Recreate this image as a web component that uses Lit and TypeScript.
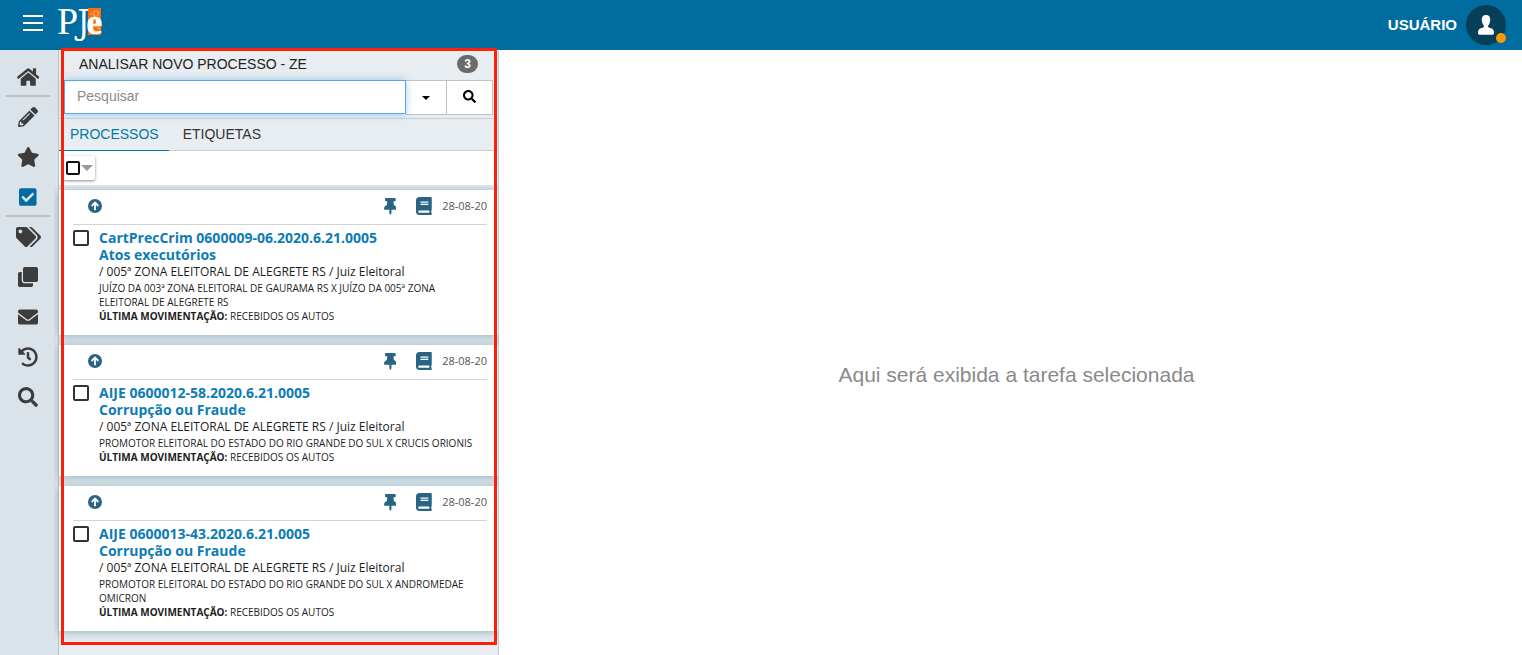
import { LitElement, html, svg, css } from "lit";
import { customElement, property, state } from "lit/decorators.js";
import { classMap } from "lit/directives/class-map.js";

const ICONS: Record<string, [number, string]> = {
  home: [576, "M280.37 148.26L96 300.11V464a16 16 0 0 0 16 16l112.06-.29a16 16 0 0 0 15.92-16V368a16 16 0 0 1 16-16h64a16 16 0 0 1 16 16v95.64a16 16 0 0 0 16 16.05L464 480a16 16 0 0 0 16-16V300L295.67 148.26a12.19 12.19 0 0 0-15.3 0zM571.6 251.47L488 182.56V44.05a12 12 0 0 0-12-12h-56a12 12 0 0 0-12 12v72.61L318.47 43a48 48 0 0 0-61 0L4.34 251.47a12 12 0 0 0-1.6 16.9l25.5 31A12 12 0 0 0 45.15 301l235.22-193.74a12.19 12.19 0 0 1 15.3 0L530.9 301a12 12 0 0 0 16.9-1.6l25.5-31a12 12 0 0 0-1.7-16.93z"],
  pencil: [512, "M497.9 142.1l-46.1 46.1c-4.7 4.7-12.3 4.7-17 0l-111-111c-4.7-4.7-4.7-12.3 0-17l46.1-46.1c18.7-18.7 49.1-18.7 67.9 0l60.1 60.1c18.8 18.7 18.8 49.1 0 67.9zM284.2 99.8L21.6 362.4.4 483.9c-2.9 16.4 11.4 30.6 27.8 27.8l121.5-21.3 262.6-262.6c4.7-4.7 4.7-12.3 0-17l-111-111c-4.8-4.7-12.4-4.7-17.1 0zM124.1 339.9c-5.5-5.5-5.5-14.3 0-19.8l154-154c5.5-5.5 14.3-5.5 19.8 0s5.5 14.3 0 19.8l-154 154c-5.5 5.5-14.3 5.5-19.8 0zM88 424h48v36.3l-64.5 11.3-31.1-31.1L51.7 376H88v48z"],
  star: [576, "M259.3 17.8L194 150.2 47.9 171.5c-26.2 3.8-36.7 36.1-17.7 54.6l105.7 103-25 145.5c-4.5 26.3 23.2 46 46.4 33.7L288 439.6l130.7 68.7c23.2 12.2 50.9-7.4 46.4-33.7l-25-145.5 105.7-103c19-18.5 8.5-50.8-17.7-54.6L382 150.2 316.7 17.8c-11.7-23.6-45.6-23.9-57.4 0z"],
  check: [448, "M400 480H48c-26.51 0-48-21.49-48-48V80c0-26.51 21.49-48 48-48h352c26.51 0 48 21.49 48 48v352c0 26.51-21.49 48-48 48zm-204.686-98.059l184-184c6.248-6.248 6.248-16.379 0-22.627l-22.627-22.627c-6.248-6.248-16.379-6.249-22.628 0L184 302.745l-70.059-70.059c-6.248-6.248-16.379-6.248-22.628 0l-22.627 22.627c-6.248 6.248-6.248 16.379 0 22.627l104 104c6.249 6.25 16.379 6.25 22.628.001z"],
  tags: [640, "M497.941 225.941L286.059 14.059A48 48 0 0 0 252.118 0H48C21.49 0 0 21.49 0 48v204.118a48 48 0 0 0 14.059 33.941l211.882 211.882c18.744 18.745 49.136 18.746 67.882 0l204.118-204.118c18.745-18.745 18.745-49.137 0-67.882zM112 160c-26.51 0-48-21.49-48-48s21.49-48 48-48 48 21.49 48 48-21.49 48-48 48zm513.941 133.823L421.823 497.941c-18.745 18.745-49.137 18.745-67.882 0l-.36-.36L527.64 323.522c16.999-16.999 26.36-39.6 26.36-63.64s-9.362-46.641-26.36-63.64L331.397 0h48.721a48 48 0 0 1 33.941 14.059l211.882 211.882c18.745 18.745 18.745 49.137 0 67.882z"],
  clone: [512, "M464 0c26.51 0 48 21.49 48 48v288c0 26.51-21.49 48-48 48H176c-26.51 0-48-21.49-48-48V48c0-26.51 21.49-48 48-48h288M176 416c-44.112 0-80-35.888-80-80V128H48c-26.51 0-48 21.49-48 48v288c0 26.51 21.49 48 48 48h288c26.51 0 48-21.49 48-48v-48H176z"],
  envelope: [512, "M502.3 190.8c3.9-3.1 9.7-.2 9.7 4.7V400c0 26.5-21.5 48-48 48H48c-26.5 0-48-21.5-48-48V195.6c0-5 5.7-7.8 9.7-4.7 22.4 17.4 52.1 39.5 154.1 113.6 21.1 15.4 56.7 47.8 92.2 47.6 35.7.3 72-32.8 92.3-47.6 102-74.1 131.6-96.3 154-113.7zM256 320c23.2.4 56.6-29.2 73.4-41.4 132.7-96.3 142.8-104.7 173.4-128.7 5.8-4.5 9.2-11.5 9.2-18.9v-19c0-26.5-21.5-48-48-48H48c-26.5 0-48 21.5-48 48v19c0 7.4 3.4 14.3 9.2 18.9 30.6 23.9 40.7 32.4 173.4 128.7 16.8 12.2 50.2 41.8 73.4 41.4z"],
  history: [512, "M504 255.531c.253 136.64-111.18 248.372-247.82 248.468-59.015.042-113.223-20.53-155.822-54.911-11.077-8.94-11.905-25.541-1.839-35.607l11.267-11.267c8.609-8.609 22.353-9.551 31.891-1.984C173.062 425.135 212.781 440 256 440c101.705 0 184-82.311 184-184 0-101.705-82.311-184-184-184-48.814 0-93.149 18.969-126.068 49.932l50.754 50.754c10.08 10.08 2.941 27.314-11.313 27.314H24c-8.837 0-16-7.163-16-16V38.627c0-14.254 17.234-21.393 27.314-11.314l49.372 49.372C129.209 34.136 189.552 8 256 8c136.81 0 247.747 110.78 248 247.531zm-180.912 78.784l9.823-12.63c8.138-10.463 6.253-25.542-4.21-33.679L288 256.349V152c0-13.255-10.745-24-24-24h-16c-13.255 0-24 10.745-24 24v135.651l65.409 50.874c10.463 8.137 25.541 6.253 33.679-4.21z"],
  search: [512, "M505 442.7L405.3 343c-4.5-4.5-10.6-7-17-7H372c27.6-35.3 44-79.7 44-128C416 93.1 322.9 0 208 0S0 93.1 0 208s93.1 208 208 208c48.3 0 92.7-16.4 128-44v16.3c0 6.4 2.5 12.5 7 17l99.7 99.7c9.4 9.4 24.6 9.4 33.9 0l28.3-28.3c9.4-9.4 9.4-24.6.1-34zM208 336c-70.7 0-128-57.2-128-128 0-70.7 57.2-128 128-128 70.7 0 128 57.2 128 128 0 70.7-57.2 128-128 128z"],
  pin: [384, "M298.028 214.267L285.793 96H328c13.255 0 24-10.745 24-24V24c0-13.255-10.745-24-24-24H56C42.745 0 32 10.745 32 24v48c0 13.255 10.745 24 24 24h42.207L85.972 214.267C37.465 236.82 0 277.261 0 328c0 13.255 10.745 24 24 24h136v104.007c0 1.242.289 2.467.845 3.578l24 48c2.941 5.882 11.364 5.893 14.311 0l24-48a8.008 8.008 0 0 0 .845-3.578V352h136c13.255 0 24-10.745 24-24-.001-51.183-37.983-91.42-85.973-113.733z"],
  book: [448, "M448 360V24c0-13.3-10.7-24-24-24H96C43 0 0 43 0 96v320c0 53 43 96 96 96h328c13.3 0 24-10.7 24-24v-16c0-7.5-3.5-14.3-8.9-18.7-4.2-15.4-4.2-59.3 0-74.7 5.4-4.3 8.9-11.1 8.9-18.6zM128 134c0-3.3 2.7-6 6-6h212c3.3 0 6 2.7 6 6v20c0 3.3-2.7 6-6 6H134c-3.3 0-6-2.7-6-6v-20zm0 64c0-3.3 2.7-6 6-6h212c3.3 0 6 2.7 6 6v20c0 3.3-2.7 6-6 6H134c-3.3 0-6-2.7-6-6v-20zm253.4 250H96c-17.7 0-32-14.3-32-32 0-17.6 14.4-32 32-32h285.4c-1.9 17.1-1.9 46.9 0 64z"],
};

const icon = (name: string, size: number) => {
  const [w, d] = ICONS[name];
  return html`<svg viewBox="0 0 ${w} 512" width=${(w / 512) * size} height=${size} aria-hidden="true">${svg`<path d=${d} fill="currentColor"></path>`}</svg>`;
};

interface Processo {
  titulo: string;
  assunto: string;
  orgao: string;
  partes: string;
  movimentacao: string;
  data: string;
}

const PROCESSOS: Processo[] = [
  {
    titulo: "CartPrecCrim 0600009-06.2020.6.21.0005",
    assunto: "Atos executórios",
    orgao: "/ 005ª ZONA ELEITORAL DE ALEGRETE RS / Juiz Eleitoral",
    partes: "JUÍZO DA 003ª ZONA ELEITORAL DE GAURAMA RS X JUÍZO DA 005ª ZONA ELEITORAL DE ALEGRETE RS",
    movimentacao: "RECEBIDOS OS AUTOS",
    data: "28-08-20",
  },
  {
    titulo: "AIJE 0600012-58.2020.6.21.0005",
    assunto: "Corrupção ou Fraude",
    orgao: "/ 005ª ZONA ELEITORAL DE ALEGRETE RS / Juiz Eleitoral",
    partes: "PROMOTOR ELEITORAL DO ESTADO DO RIO GRANDE DO SUL X CRUCIS ORIONIS",
    movimentacao: "RECEBIDOS OS AUTOS",
    data: "28-08-20",
  },
  {
    titulo: "AIJE 0600013-43.2020.6.21.0005",
    assunto: "Corrupção ou Fraude",
    orgao: "/ 005ª ZONA ELEITORAL DE ALEGRETE RS / Juiz Eleitoral",
    partes: "PROMOTOR ELEITORAL DO ESTADO DO RIO GRANDE DO SUL X ANDROMEDAE OMICRON",
    movimentacao: "RECEBIDOS OS AUTOS",
    data: "28-08-20",
  },
];

const MENU = [
  { icone: "home", rotulo: "Início", linha: true },
  { icone: "pencil", rotulo: "Assinaturas" },
  { icone: "star", rotulo: "Minhas tarefas" },
  { icone: "check", rotulo: "Tarefas", linha: true, ativo: true },
  { icone: "tags", rotulo: "Etiquetas" },
  { icone: "clone", rotulo: "Modelos" },
  { icone: "envelope", rotulo: "Expedientes" },
  { icone: "history", rotulo: "Histórico" },
  { icone: "search", rotulo: "Consulta" },
];

const reset = css`
  * { box-sizing: border-box; }
  svg { display: block; flex: none; }
  button {
    margin: 0;
    padding: 0;
    border: 0;
    background: none;
    color: inherit;
    font: inherit;
    cursor: pointer;
  }
  .tick {
    appearance: none;
    flex: none;
    width: 16px;
    height: 16px;
    margin: 0;
    border: 2px solid #333;
    border-radius: 2px;
    background: #fff;
  }
  .tick:checked { background: #006c9f; }
`;

@customElement("processo-card")
class ProcessoCard extends LitElement {
  @property({ attribute: false }) processo!: Processo;

  static styles = [reset, css`
    :host {
      display: block;
      padding: 0 11px 12px 14px;
      background: #fff;
      box-shadow: 0 1px 10px #8fadbd;
      font-family: "Open Sans", sans-serif;
      color: #1c1c1c;
    }
    .top {
      display: flex;
      align-items: center;
      height: 35px;
      padding: 0 0 2px 15px;
      border-bottom: 1px solid #d3d3d3;
      color: #2a6485;
    }
    .pin { margin-left: auto; }
    .book { margin-left: 20px; }
    .date {
      margin-left: 10px;
      font-size: 11px;
      line-height: 16px;
      color: #555;
    }
    .body {
      display: flex;
      align-items: flex-start;
      gap: 10px;
      padding: 4px 12px 0 0;
    }
    .body .tick { margin-top: 1px; }
    .info { min-width: 0; }
    .title {
      display: block;
      color: #0d7cb5;
      font-size: 14px;
      font-weight: 700;
      line-height: 17px;
      text-decoration: none;
    }
    .court { font-size: 12px; line-height: 18px; }
    .small { font-size: 10px; line-height: 14px; }
  `];

  render() {
    const p = this.processo;
    return html`
      <div class="top">
        <button aria-label="Mover para o topo">
          <svg viewBox="0 0 14 14" width="14" height="14" aria-hidden="true">
            <circle cx="7" cy="7" r="7" fill="currentColor"></circle>
            <path d="M7 11.2V3.8M3.6 7L7 3.600 10.4 7" fill="none" stroke="#fff" stroke-width="1.8"></path>
          </svg>
        </button>
        <button class="pin" aria-label="Fixar">${icon("pin", 17)}</button>
        <button class="book" aria-label="Abrir autos">${icon("book", 18)}</button>
        <span class="date">${p.data}</span>
      </div>
      <div class="body">
        <input class="tick" type="checkbox" aria-label=${p.titulo} />
        <div class="info">
          <a class="title" href="#">${p.titulo}<br />${p.assunto}</a>
          <div class="court">${p.orgao}</div>
          <div class="small">${p.partes}</div>
          <div class="small"><b>ÚLTIMA MOVIMENTAÇÃO:</b> ${p.movimentacao}</div>
        </div>
      </div>
    `;
  }
}

@customElement("app-root")
class AppRoot extends LitElement {
  @state() private aba = "PROCESSOS";

  static styles = [reset, css`
    :host {
      display: flex;
      flex-direction: column;
      min-height: 100vh;
      background: #fff;
      font-family: "Liberation Sans", Arial, sans-serif;
      font-size: 14px;
      color: #222;
    }
    .header {
      display: flex;
      align-items: center;
      height: 50px;
      padding: 0 16px 0 23px;
      background: #006c9f;
      color: #fff;
    }
    .burger {
      display: flex;
      flex-direction: column;
      gap: 5px;
      width: 20px;
      padding-bottom: 4px;
    }
    .burger span { height: 2px; background: #fff; }
    .logo { margin-left: 14px; }
    .user {
      display: flex;
      align-items: center;
      gap: 9px;
      margin-left: auto;
      font-size: 15px;
      font-weight: 700;
    }
    .user span { padding-bottom: 2px; }
    .layout { display: flex; flex: 1; }
    .side {
      flex: none;
      width: 59px;
      padding: 7px 8px 0 6px;
      background: #dbe3ea;
      border-right: 1px solid #b9c2c9;
    }
    .side a {
      display: flex;
      align-items: center;
      justify-content: center;
      height: 40px;
      color: #3c3c3c;
    }
    .side a.line { border-bottom: 2px solid #c0c0c0; padding-top: 2px; }
    .side a.active { color: #006c9f; }
    .panel {
      flex: none;
      width: 440px;
      background: #e8edf1;
      border-right: 1px solid #c4cbd0;
    }
    .framed { position: relative; padding-bottom: 14px; }
    .framed::after {
      content: "";
      position: absolute;
      inset: -2px 1px 0 2px;
      border: 3px solid #fb2108;
      pointer-events: none;
    }
    .heading {
      display: flex;
      align-items: center;
      justify-content: space-between;
      height: 30px;
      padding: 0 20px 2px;
    }
    .heading h1 { margin: 0; font-size: 14px; font-weight: 400; line-height: 20px; }
    .badge {
      min-width: 21px;
      padding: 0 7px;
      border-radius: 9px;
      background: #6b6b6b;
      color: #fff;
      font-size: 12px;
      font-weight: 700;
      line-height: 18px;
      text-align: center;
    }
    .search {
      display: flex;
      height: 38px;
      padding: 0 5px 3px;
    }
    .search input {
      position: relative;
      flex: 1;
      min-width: 0;
      height: 34px;
      padding: 0 12px 2px;
      border: 1px solid #5aa4e6;
      border-radius: 0;
      outline: 0;
      box-shadow: 0 0 8px rgba(102, 175, 233, 0.6);
      font: inherit;
    }
    .search input::placeholder { color: #8b8b8b; opacity: 1; }
    .search button {
      display: flex;
      align-items: center;
      justify-content: center;
      width: 41px;
      border: 1px solid #c2c2c2;
      border-left: 0;
      background: #fff;
      color: #000;
    }
    .search .go { width: 46px; padding-bottom: 2px; }
    .caret { border: 4px solid transparent; border-top-color: currentColor; border-bottom: 0; }
    .tabs {
      display: flex;
      gap: 3px;
      height: 33px;
      border-top: 1px solid #c6ced4;
      border-bottom: 1px solid #c6ced4;
    }
    .tabs button {
      height: 32px;
      padding: 0 11px 2px;
      border-bottom: 1px solid transparent;
      color: #333;
    }
    .tabs button.on { padding-right: 10px; border-bottom-color: #0079a8; color: #0079a8; }
    .tools { height: 34px; padding: 5px 0 0 4px; background: #fff; }
    .select-all {
      display: flex;
      align-items: center;
      gap: 1px;
      width: 32px;
      height: 24px;
      padding-left: 3px;
      border-radius: 2px;
      background: #fff;
      box-shadow: 0 1px 3px rgba(0, 0, 0, 0.45);
    }
    .select-all .tick { width: 14px; height: 14px; border-color: #111; }
    .select-all .arrow {
      border: 6px solid transparent;
      border-top-color: #9a9a9a;
      border-bottom: 0;
    }
    .list {
      display: flex;
      flex-direction: column;
      gap: 10px;
      padding-top: 5px;
      clip-path: inset(0 0 -12px -5px);
    }
    .main {
      display: flex;
      flex: 1;
      align-items: center;
      justify-content: center;
      padding: 44px 0 0 12px;
      color: #8a8a8a;
      font-size: 21px;
      line-height: 28px;
    }
    .logo-p { font-family: "Liberation Serif", serif; font-size: 38px; }
    .logo-j { font-family: "DejaVu Serif Condensed", "DejaVu Serif", serif; font-size: 34px; }
    .logo-e { font-family: "Liberation Serif", serif; font-size: 35px; font-weight: 700; stroke: #fff; stroke-width: 0.6px; }
  `];

  private tab(nome: string) {
    return html`<button
      role="tab"
      class=${classMap({ on: this.aba === nome })}
      aria-selected=${this.aba === nome ? "true" : "false"}
      @click=${() => (this.aba = nome)}
    >${nome}</button>`;
  }

  render() {
    return html`
      <header class="header">
        <button class="burger" aria-label="Menu"><span></span><span></span><span></span></button>
        <svg class="logo" viewBox="0 0 48 50" width="48" height="50" role="img" aria-label="PJe">
          <rect x="31" y="8" width="13" height="27" fill="#f96d0c"></rect>
          <path d="M33 14h4v-3h4v5h-4v-2M37 16v3M41 13h2M33 20h2M40 28h3v3" fill="none" stroke="#fba564" stroke-width="1"></path>
          <text x="0" y="34" fill="#fff"><tspan class="logo-p">P</tspan><tspan class="logo-j" dx="-1">J</tspan><tspan class="logo-e" dx="-3">e</tspan></text>
        </svg>
        <div class="user">
          <span>USUÁRIO</span>
          <svg viewBox="0 0 40 40" width="40" height="40" aria-hidden="true">
            <circle cx="20" cy="20" r="20" fill="#053f58"></circle>
            <path d="M20 10c3 0 4.500 2.200 4.200 5.300-.2 2.700-1.400 4.800-2.200 5.600.2 1.100.6 1.500 2.200 2 2.600.7 3.800 1.700 3.800 5.100 0 1.200-.7 1.700-1.600 1.700H13.600c-.9 0-1.600-.5-1.600-1.700 0-3.400 1.200-4.400 3.800-5.100 1.600-.5 2-.9 2.200-2-.8-.8-2-2.900-2.200-5.600C15.500 12.200 17 10 20 10z" fill="#fff"></path>
            <circle cx="35" cy="33" r="5" fill="#ff9800"></circle>
          </svg>
        </div>
      </header>
      <div class="layout">
        <nav class="side">
          ${MENU.map((m) => html`<a
            href="#"
            aria-label=${m.rotulo}
            class=${classMap({ line: !!m.linha, active: !!m.ativo })}
          >${icon(m.icone, 20)}</a>`)}
        </nav>
        <section class="panel">
          <div class="framed">
            <div class="heading">
              <h1>ANALISAR NOVO PROCESSO - ZE</h1>
              <span class="badge">3</span>
            </div>
            <div class="search">
              <input type="text" placeholder="Pesquisar" aria-label="Pesquisar" />
              <button aria-label="Opções de pesquisa"><span class="caret"></span></button>
              <button class="go" aria-label="Buscar">${icon("search", 13)}</button>
            </div>
            <div class="tabs" role="tablist">${this.tab("PROCESSOS")}${this.tab("ETIQUETAS")}</div>
            <div class="tools">
              <div class="select-all">
                <input class="tick" type="checkbox" aria-label="Selecionar todos" />
                <button class="arrow" aria-label="Opções de seleção"></button>
              </div>
            </div>
            <div class="list">
              ${PROCESSOS.map((p) => html`<processo-card .processo=${p}></processo-card>`)}
            </div>
          </div>
        </section>
        <main class="main">Aqui será exibida a tarefa selecionada</main>
      </div>
    `;
  }
}
